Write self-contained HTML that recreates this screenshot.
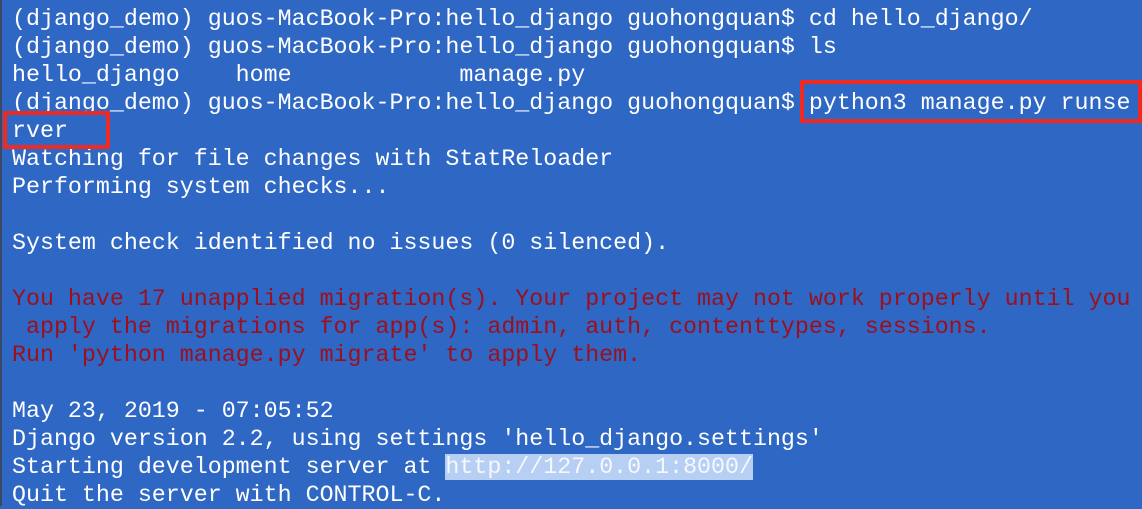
<!DOCTYPE html>
<html><head><meta charset="utf-8"><style>
html,body{margin:0;padding:0;width:1142px;height:506px;overflow:hidden;background:#2e67c4;}
.strip{position:absolute;left:0;top:0;width:2px;height:506px;background:#3a4a66;}
pre{position:absolute;left:12px;top:5px;margin:0;font-family:"Liberation Mono",monospace;font-size:23.3px;line-height:28px;color:#fff;white-space:pre;}
.r{color:#9e0f1c;}
.sel{background:#b7cff3;color:#f4f8ff;}
.box{position:absolute;border:4px solid #ee2a24;box-sizing:border-box;}
</style></head><body>
<div class="strip"></div>
<pre>(django_demo) guos-MacBook-Pro:hello_django guohongquan$ cd hello_django/
(django_demo) guos-MacBook-Pro:hello_django guohongquan$ ls
hello_django    home            manage.py
(django_demo) guos-MacBook-Pro:hello_django guohongquan$ python3 manage.py runse
rver
Watching for file changes with StatReloader
Performing system checks...

System check identified no issues (0 silenced).

<span class="r">You have 17 unapplied migration(s). Your project may not work properly until you
 apply the migrations for app(s): admin, auth, contenttypes, sessions.
Run 'python manage.py migrate' to apply them.</span>

May 23, 2019 - 07:05:52
Django version 2.2, using settings 'hello_django.settings'
Starting development server at <span class="sel">http://127.0.0.1:8000/</span>
Quit the server with CONTROL-C.</pre>
<div class="box" style="left:800px;top:80px;width:342px;height:43px;"></div>
<div class="box" style="left:3px;top:111px;width:107px;height:38px;"></div>
</body></html>
